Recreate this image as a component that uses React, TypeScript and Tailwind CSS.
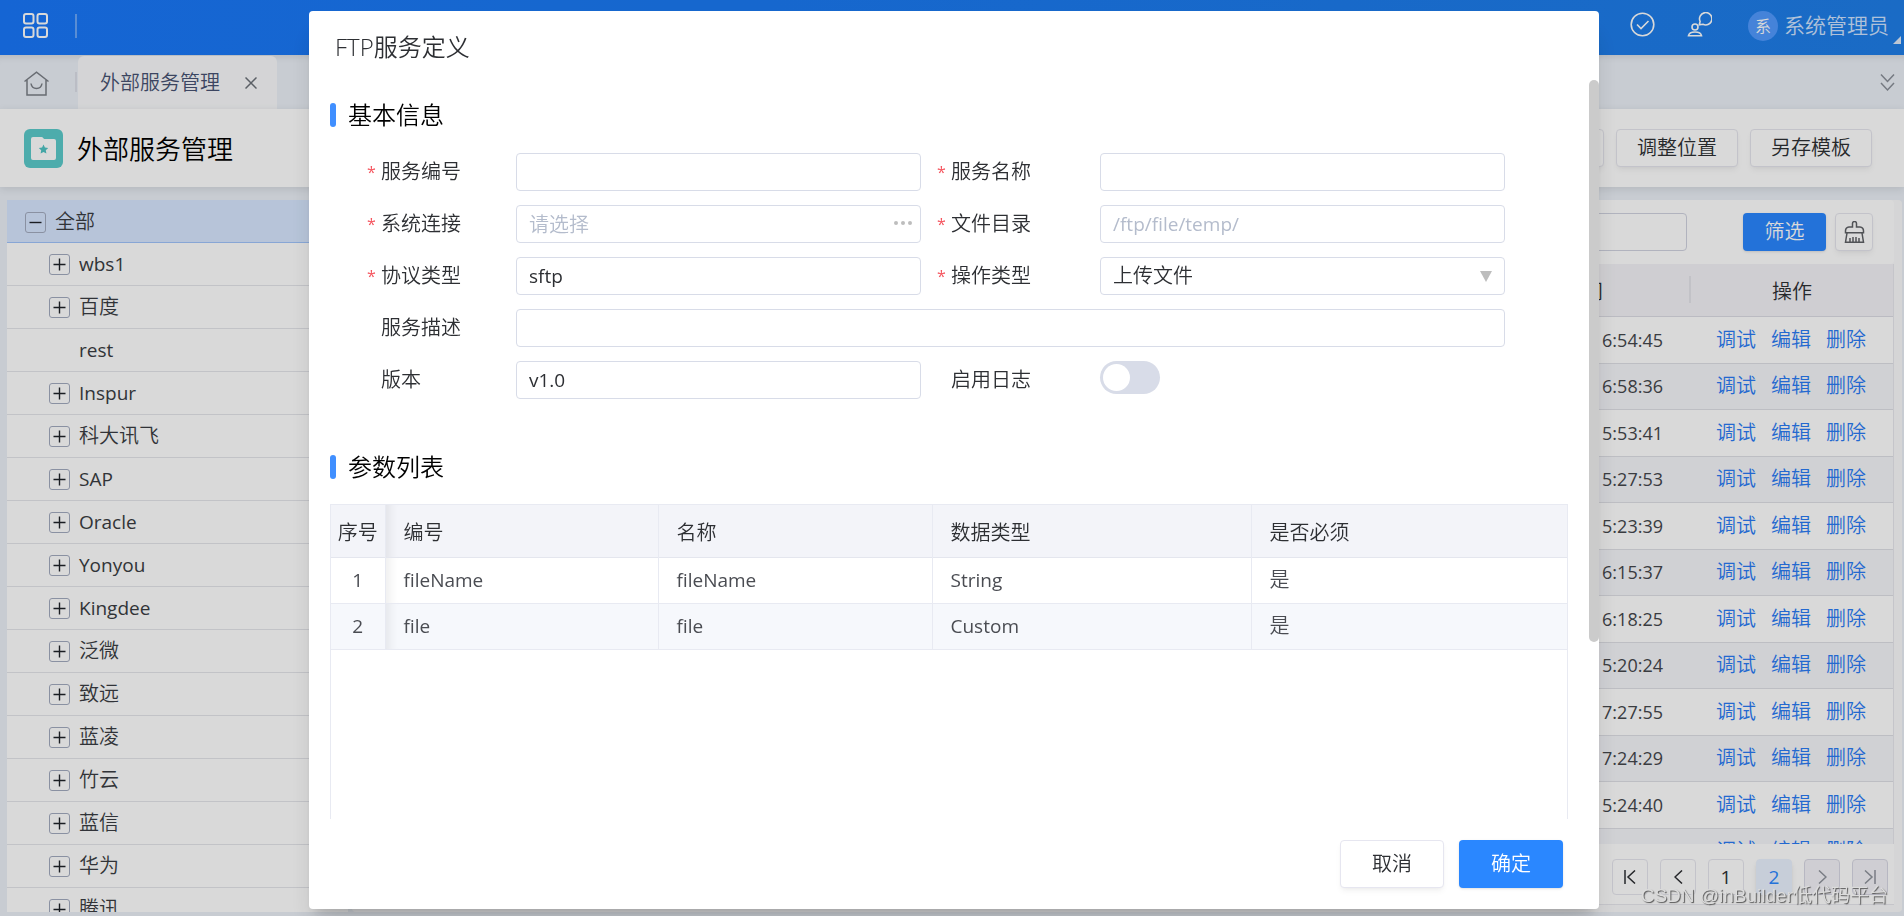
import { useState } from 'react';

const treeNodes = [
  { name: 'wbs1', leaf: false },
  { name: '百度', leaf: false },
  { name: 'rest', leaf: true },
  { name: 'Inspur', leaf: false },
  { name: '科大讯飞', leaf: false },
  { name: 'SAP', leaf: false },
  { name: 'Oracle', leaf: false },
  { name: 'Yonyou', leaf: false },
  { name: 'Kingdee', leaf: false },
  { name: '泛微', leaf: false },
  { name: '致远', leaf: false },
  { name: '蓝凌', leaf: false },
  { name: '竹云', leaf: false },
  { name: '蓝信', leaf: false },
  { name: '华为', leaf: false },
  { name: '腾讯', leaf: false },
];

const times = [
  '6:54:45', '6:58:36', '5:53:41', '5:27:53', '5:23:39', '6:15:37',
  '6:18:25', '5:20:24', '7:27:55', '7:24:29', '5:24:40', '',
];

const params = [
  { code: 'fileName', name: 'fileName', type: 'String', required: '是' },
  { code: 'file', name: 'file', type: 'Custom', required: '是' },
];

const inputClass =
  'h-[38px] w-full rounded border border-[#d8dce8] bg-white px-3 text-[#2d2f33] outline-none placeholder:text-[#b4bccc]';
const latin = ' text-[19px] font-normal';
const cjk = ' text-xl';

function TreeToggle({ open }: { open?: boolean }) {
  return (
    <button
      aria-label={open ? '收起' : '展开'}
      className="flex h-[21px] w-[21px] shrink-0 items-center justify-center rounded-[3px] border border-[#a3abbf] text-[#1f2329]"
    >
      <svg width="13" height="13" viewBox="0 0 13 13" stroke="currentColor" strokeWidth="1.4">
        <path d={open ? 'M0.5 6.5h12' : 'M0.5 6.5h12M6.5 0.5v12'} />
      </svg>
    </button>
  );
}

function Header() {
  return (
    <header className="flex h-[55px] shrink-0 items-center bg-linear-to-r from-[#1977f9] to-[#1f7ee8] pl-[23px] text-white">
      <button aria-label="应用" className="pb-1">
        <svg width="25" height="25" viewBox="0 0 25 25" fill="none" stroke="currentColor" strokeWidth="2">
          <rect x="1" y="1" width="9.5" height="9.5" rx="2" />
          <rect x="14.5" y="1" width="9.5" height="9.5" rx="2" />
          <rect x="1" y="14.5" width="9.5" height="9.5" rx="2" />
          <rect x="14.5" y="14.5" width="9.5" height="9.5" rx="2" />
        </svg>
      </button>
      <div className="mb-1 ml-[27px] h-6 w-0.5 bg-white/35" />
      <div className="ml-auto flex items-center">
        <button aria-label="任务" className="mr-8 pb-1.5">
          <svg width="25" height="25" viewBox="0 0 25 25" fill="none" stroke="currentColor" strokeWidth="1.6">
            <circle cx="12.5" cy="12.5" r="11.3" />
            <path d="M7 12.5l4 4 7.5-7.5" />
          </svg>
        </button>
        <button aria-label="消息" className="mr-9 pb-1.5">
          <svg width="25" height="25" viewBox="0 0 25 25" fill="none" stroke="currentColor" strokeWidth="1.6">
            <circle cx="8" cy="15" r="3" />
            <path d="M1.500 23.700c.5-2.700 3-3.700 6.500-3.700s6 1 6.500 3.700z" />
            <path d="M12.300 12.800l.8-3.400a6.200 6.200 0 1 1 2.800 2.900z" />
          </svg>
        </button>
        <span className="mb-1 flex h-[30px] w-[30px] items-center justify-center rounded-full bg-[#529bff] text-base">系</span>
        <span className="mb-1 ml-1.5 text-[21px] text-[#cfe3ff]">系统管理员</span>
        <svg className="mt-6 mr-[3px] ml-1" width="8" height="8" viewBox="0 0 8 8" fill="#dfe9f8">
          <path d="M8 0v8H0z" />
        </svg>
      </div>
    </header>
  );
}

function TabBar() {
  return (
    <nav className="flex h-[54px] shrink-0 items-center bg-[#ebf0f7] pr-[9px] pl-6 shadow-[inset_0_8px_8px_-8px_rgba(0,0,0,0.15)]">
      <button aria-label="首页" className="pt-0.5 text-[#7b7f87]">
        <svg width="25" height="25" viewBox="0 0 25 25" fill="none" stroke="currentColor" strokeWidth="1.5">
          <path d="M0.500 10.500L12.500 1.200l12 9.300M3 9v15h19V9" />
          <path d="M7 12.500c1 6.500 10 6.500 11 0" />
        </svg>
      </button>
      <div className="ml-[26px] h-5 w-0.5 bg-[#dcdfe8]" />
      <div className="mt-px ml-px flex h-[53px] w-[199px] items-center rounded-t-md bg-[#f9fafc] pl-[22px]">
        <a href="#service" className="text-xl text-[#475272]">外部服务管理</a>
        <button aria-label="关闭" className="ml-[25px] text-[#6c7078]">
          <svg width="12" height="12" viewBox="0 0 12 12" stroke="currentColor" strokeWidth="1.5">
            <path d="M0.500 0.500l11 11M11.500 0.500l-11 11" />
          </svg>
        </button>
      </div>
      <button aria-label="更多标签" className="ml-auto text-[#8a8f98]">
        <svg width="15" height="19" viewBox="0 0 15 19" fill="none" stroke="currentColor" strokeWidth="1.5">
          <path d="M1 1.500l6.500 7 6.500-7M1 10l6.500 7 6.500-7" />
        </svg>
      </button>
    </nav>
  );
}

function TitleBar() {
  const btn = 'h-[38px] w-[122px] rounded border border-[#e6e6ee] bg-white text-xl text-[#2d2f33] shadow-md shadow-black/5';
  return (
    <div className="z-10 flex h-[78px] shrink-0 items-center bg-white pr-8 pl-6 shadow-[0_2px_8px_rgba(0,0,0,0.1)]">
      <div className="flex h-[39px] w-[39px] items-center justify-center rounded-md bg-[#5bcbcb]">
        <svg width="25" height="23" viewBox="0 0 25 23" fill="white">
          <path d="M2 0h8.500c1.500 0 2 2 3 2H23a2 2 0 0 1 2 2v17a2 2 0 0 1-2 2H2a2 2 0 0 1-2-2V2a2 2 0 0 1 2-2z" />
          <path
            fill="#4fc3c3"
            d="M12.500 7.500l1.400 3 3.300.4-2.400 2.300.6 3.300-2.900-1.600-2.900 1.600.6-3.300-2.400-2.300 3.300-.4z"
          />
        </svg>
      </div>
      <h1 className="ml-3.5 pt-0.5 text-[26px] text-black">外部服务管理</h1>
      <div className="ml-auto flex gap-3">
        <button aria-label="更多操作" className={btn} />
        <button className={btn}>调整位置</button>
        <button className={btn}>另存模板</button>
      </div>
    </div>
  );
}

function ServiceTree() {
  return (
    <aside className="w-[341px] shrink-0 overflow-hidden bg-white text-[#3a3d42]">
      <div className="flex h-[43px] items-center gap-[9px] border-b border-[#a0c4fb] bg-[#d7e7ff] pt-0.5 pl-[18px] text-xl">
        <TreeToggle open />
        全部
      </div>
      <ul>
        {treeNodes.map((node) => (
          <li
            key={node.name}
            className={
              'flex h-[43px] items-center gap-[9px] border-b border-[#e4e5ea] pl-[42px]' +
              (/[a-z]/i.test(node.name) ? latin : cjk)
            }
          >
            {node.leaf ? <span className="w-[21px]" /> : <TreeToggle />}
            {node.name}
          </li>
        ))}
      </ul>
    </aside>
  );
}

function Pager() {
  const base = 'flex h-9 w-9 items-center justify-center rounded border text-[19px] font-normal';
  return (
    <div className="flex h-[61px] shrink-0 items-center justify-end gap-3 border-b border-[#e8e8ee] bg-white pt-1.5 pr-1.5">
      <button aria-label="首页" className={base + ' border-[#e6e6ee] text-[#2d2f33]'}>
        <svg width="12" height="14" viewBox="0 0 12 14" fill="none" stroke="currentColor" strokeWidth="1.5">
          <path d="M1 0v14M11 0.500L4 7l7 6.500" />
        </svg>
      </button>
      <button aria-label="上一页" className={base + ' border-[#e6e6ee] text-[#2d2f33]'}>
        <svg width="9" height="14" viewBox="0 0 9 14" fill="none" stroke="currentColor" strokeWidth="1.500">
          <path d="M8 0.500L1 7l7 6.500" />
        </svg>
      </button>
      <button className={base + ' border-[#e6e6ee] text-[#2d2f33]'}>1</button>
      <button className={base + ' border-[#eaf2ff] bg-[#eaf2ff] text-[#2a87ff] shadow-md shadow-black/10'}>2</button>
      <button aria-label="下一页" disabled className={base + ' border-[#d8d8e4] bg-[#f4f3f8] text-[#8f939c]'}>
        <svg width="9" height="14" viewBox="0 0 9 14" fill="none" stroke="currentColor" strokeWidth="1.500">
          <path d="M1 0.500L8 7l-7 6.500" />
        </svg>
      </button>
      <button aria-label="末页" disabled className={base + ' border-[#d8d8e4] bg-[#f4f3f8] text-[#8f939c]'}>
        <svg width="12" height="14" viewBox="0 0 12 14" fill="none" stroke="currentColor" strokeWidth="1.500">
          <path d="M11 0v14M1 0.500L8 7l-7 6.500" />
        </svg>
      </button>
    </div>
  );
}

function ServiceList() {
  return (
    <section className="flex min-w-0 flex-1 flex-col rounded bg-[#fbfbfc] pr-2 pb-[7px]">
      <div className="flex h-16 shrink-0 items-center justify-end rounded bg-white pr-[21px]">
        <input aria-label="搜索" className="h-[38px] w-[240px] rounded border border-[#d0d3e0] bg-white px-3" />
        <button className="ml-14 h-[38px] w-[83px] rounded bg-[#2a87ff] text-xl text-white shadow-sm">筛选</button>
        <button
          aria-label="清空"
          className="ml-[9px] flex h-[38px] w-[38px] items-center justify-center rounded border border-[#e6e6ee] bg-white text-[#5f6166] shadow-md shadow-black/5"
        >
          <svg width="21" height="22" viewBox="0 0 21 22" fill="none" stroke="currentColor" strokeWidth="1.500">
            <path d="M8.500 6V2.500a2 2 0 0 1 4 0V6h3.500a4 4 0 0 1 3.500 4v1.800h-18V10a4 4 0 0 1 3.500-4z" />
            <path d="M3 12l-1.500 9.200h18L18 12" />
            <path d="M6 21v-4M9 21v-5M12 21v-5M15 21v-4" />
          </svg>
        </button>
      </div>
      <div className="min-h-0 flex-1 overflow-hidden border-r border-[#e8e8ee] bg-white">
        <table className="w-full table-fixed">
          <thead>
            <tr className="h-[52px] border-b border-[#dcdce4] bg-[#f4f3f7] text-xl text-[#2d2f33]">
              <th className="pt-1 pr-[86px] pb-0 text-right font-[350]">间</th>
              <th className="w-[204px] p-0 font-[350]">
                <div className="flex h-[27px] items-center justify-center border-l-2 border-[#e4e4ea] pt-1">操作</div>
              </th>
            </tr>
          </thead>
          <tbody>
            {times.map((time, i) => (
              <tr
                key={i}
                className="border-b border-[#dfe0e6] odd:h-[47px] even:h-[46px] even:bg-[#f5f6fa]"
              >
                <td className="pr-[26px] text-right text-lg font-normal text-[#45474c]">{time}</td>
                <td>
                  <div className="flex justify-center gap-[15px] text-xl text-[#2a7bf5]">
                    <a href="#debug">调试</a>
                    <a href="#edit">编辑</a>
                    <a href="#delete">删除</a>
                  </div>
                </td>
              </tr>
            ))}
          </tbody>
        </table>
      </div>
      <Pager />
    </section>
  );
}

function Label({ id, text, required, second }: { id: string; text: string; required?: boolean; second?: boolean }) {
  return (
    <label htmlFor={id} className={'flex items-center text-xl text-[#2d2f33]' + (second ? ' pl-4' : '')}>
      <span className="w-3.5 text-base font-normal text-[#f5545e]">{required ? '*' : ''}</span>
      {text}
    </label>
  );
}

function SectionTitle({ text }: { text: string }) {
  return (
    <h3 className="flex h-6 items-center gap-3 text-2xl text-black">
      <span className="h-6 w-1.5 rounded-[3px] bg-[#408fff]" />
      {text}
    </h3>
  );
}

function ServiceForm() {
  const [log, setLog] = useState(false);
  return (
    <form className="mt-[26px] grid grid-cols-[149px_1fr_179px_1fr] gap-y-3.5 pr-[63px] pl-[37px]">
      <Label id="code" text="服务编号" required />
      <input id="code" className={inputClass + latin} />
      <Label id="name" text="服务名称" required second />
      <input id="name" className={inputClass + latin} />

      <Label id="link" text="系统连接" required />
      <div className="relative">
        <input id="link" placeholder="请选择" className={inputClass + cjk} />
        <button type="button" aria-label="选择连接" className="absolute top-4 right-[9px] flex gap-[3px]">
          <span className="h-1 w-1 rounded-full bg-[#bdbdbd]" />
          <span className="h-1 w-1 rounded-full bg-[#bdbdbd]" />
          <span className="h-1 w-1 rounded-full bg-[#bdbdbd]" />
        </button>
      </div>
      <Label id="dir" text="文件目录" required second />
      <input id="dir" placeholder="/ftp/file/temp/" className={inputClass + latin} />

      <Label id="protocol" text="协议类型" required />
      <input id="protocol" defaultValue="sftp" className={inputClass + latin} />
      <Label id="operation" text="操作类型" required second />
      <div className="relative">
        <select id="operation" className={inputClass + cjk + ' appearance-none'}>
          <option>上传文件</option>
        </select>
        <svg className="pointer-events-none absolute top-3.5 right-[13px]" width="12" height="11" viewBox="0 0 12 11" fill="#bdbdbd">
          <path d="M0 0h12L6 11z" />
        </svg>
      </div>

      <Label id="desc" text="服务描述" />
      <div className="col-span-3">
        <input id="desc" className={inputClass + latin} />
      </div>

      <Label id="version" text="版本" />
      <input id="version" defaultValue="v1.0" className={inputClass + latin} />
      <Label id="log" text="启用日志" second />
      <div className="flex items-start">
        <input
          id="log"
          type="checkbox"
          role="switch"
          checked={log}
          onChange={(e) => setLog(e.target.checked)}
          className="h-[33px] w-[60px] appearance-none rounded-full bg-[#d8dce8] p-[3px] before:block before:h-[27px] before:w-[27px] before:rounded-full before:bg-white checked:bg-[#2a87ff] checked:before:ml-[27px]"
        />
      </div>
    </form>
  );
}

function ParamTable() {
  const cell = 'border-l border-[#e8eaf2] pl-[18px]';
  return (
    <div className="mt-[25px] min-h-0 flex-1 border-x border-t border-[#e8eaf2]">
      <table className="w-full table-fixed text-left">
        <thead>
          <tr className="h-[52px] border-b border-[#e4e6ee] bg-[#f3f4f9] text-xl text-[#2d2f33]">
            <th className="w-[54px] pt-1 text-center font-[350]">序号</th>
            <th className={cell + ' w-[273px] pt-1 font-[350] shadow-[inset_12px_0_10px_-8px_rgba(0,0,0,0.07)]'}>编号</th>
            <th className={cell + ' w-[274px] pt-1 font-[350]'}>名称</th>
            <th className={cell + ' w-[319px] pt-1 font-[350]'}>数据类型</th>
            <th className={cell + ' pt-1 font-[350]'}>是否必须</th>
          </tr>
        </thead>
        <tbody className="text-[19px] font-normal text-[#4a4c52]">
          {params.map((p, i) => (
            <tr key={p.code} className="h-[46px] border-b border-[#e8eaf2] even:bg-[#f6f8fc]">
              <td className="text-center">{i + 1}</td>
              <td className={cell + ' shadow-[inset_12px_0_10px_-8px_rgba(0,0,0,0.07)]'}>{p.code}</td>
              <td className={cell}>{p.name}</td>
              <td className={cell}>{p.type}</td>
              <td className={cell + ' text-xl font-[350]'}>{p.required}</td>
            </tr>
          ))}
        </tbody>
      </table>
    </div>
  );
}

function ServiceDialog() {
  return (
    <div className="fixed inset-0 z-20 flex justify-center bg-black/15 pt-[11px] pb-[7px] pl-1">
      <div role="dialog" aria-label="FTP服务定义" className="flex w-full max-w-[1290px] flex-col rounded bg-white shadow-xl shadow-black/15">
        <h2 className="flex h-[69px] shrink-0 items-center pt-0.5 pl-[26px] text-2xl text-[#2d2f33]">FTP服务定义</h2>
        <div className="flex min-h-0 flex-1">
          <div className="flex min-w-0 flex-1 flex-col overflow-hidden pt-[23px] pr-[21px] pl-[21px]">
            <SectionTitle text="基本信息" />
            <ServiceForm />
            <div className="mt-14">
              <SectionTitle text="参数列表" />
            </div>
            <ParamTable />
          </div>
          <div className="w-2.5">
            <div className="h-[76%] rounded-full bg-[#cbcbcb]" />
          </div>
        </div>
        <div className="flex h-[90px] shrink-0 items-start justify-end gap-[15px] pt-[21px] pr-9">
          <button className="h-12 w-[104px] rounded border border-[#e6e6f0] bg-white text-xl text-[#2d2f33] shadow-md shadow-black/5">
            取消
          </button>
          <button className="h-12 w-[104px] rounded bg-[#2a87ff] text-xl text-white shadow-sm">确定</button>
        </div>
      </div>
    </div>
  );
}

export default function App() {
  return (
    <div className="flex h-screen flex-col overflow-hidden bg-[#ebf0f7] font-['Open_Sans','Noto_Sans_CJK_SC',sans-serif] font-[350]">
      <Header />
      <TabBar />
      <TitleBar />
      <main className="flex min-h-0 flex-1 gap-1 pt-[13px] pr-0.5 pb-1 pl-[7px]">
        <ServiceTree />
        <ServiceList />
      </main>
      <ServiceDialog />
      <div className="pointer-events-none fixed right-4 bottom-2 z-30 font-['Liberation_Sans','Noto_Sans_CJK_SC',sans-serif] text-[19px] leading-6 text-[#dcdcdc] [text-shadow:1px_1px_1px_#555]">
        CSDN @inBuilder低代码平台
      </div>
    </div>
  );
}
